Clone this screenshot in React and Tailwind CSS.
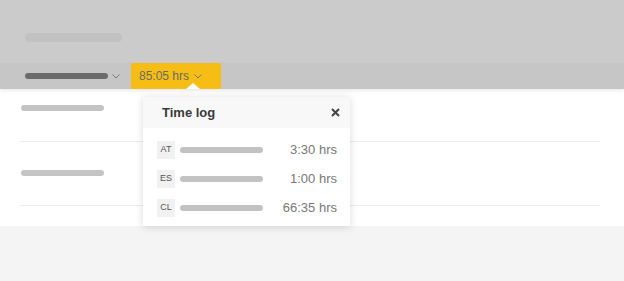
import React from 'react';

const Chevron = ({ className }) => (
  <svg className={className} width="8" height="5" viewBox="0 0 8 5" fill="none">
    <path d="M0.5 0.5 L4 4 L7.5 0.5" stroke="currentColor" strokeWidth="1" />
  </svg>
);

const entries = [
  { code: 'AT', time: '3:30 hrs' },
  { code: 'ES', time: '1:00 hrs' },
  { code: 'CL', time: '66:35 hrs' },
];

const App = () => {
  return (
    <div className="w-full min-h-[281px] bg-[#f4f4f4] font-['Liberation_Sans',Arial,sans-serif]">
      {/* Header */}
      <div className="h-[63px] bg-[#cbcbcb] pl-[25px] pt-[33px]">
        <div className="w-[97px] h-[9px] rounded-full bg-[#c1c1c1]" />
      </div>

      {/* Tabs row */}
      <div className="relative z-10 h-[26px] flex items-center bg-[#c6c6c6] pl-[25px] shadow-[0_2px_3px_rgba(0,0,0,0.08)]">
        <div className="w-[83px] h-[6px] rounded-full bg-[#6b6b6b]" />
        <Chevron className="ml-[4px] text-[#777]" />
        <div className="relative ml-[11px] h-full w-[90px] bg-[#f6be14] flex items-center pl-[8px] text-[12px] text-[#6a6a6a]">
          <span>85:05 hrs</span>
          <Chevron className="ml-[5px] text-[#777]" />
          <div className="absolute left-[55px] bottom-0 w-0 h-0 border-l-[7px] border-r-[7px] border-b-[6px] border-l-transparent border-r-transparent border-b-white" />
        </div>
      </div>

      {/* Content */}
      <div className="relative bg-white h-[137px] pl-[20px] pr-[24px]">
        <div className="h-[53px] pt-[16px] border-b border-[#ececec]">
          <div className="ml-[1px] w-[83px] h-[6px] rounded-full bg-[#c4c4c4]" />
        </div>
        <div className="h-[64px] pt-[28px] border-b border-[#ececec]">
          <div className="ml-[1px] w-[83px] h-[6px] rounded-full bg-[#c4c4c4]" />
        </div>

        {/* Time log popover */}
        <div className="absolute left-[143px] top-[8px] w-[207px] h-[129px] bg-white shadow-[0_1px_8px_rgba(0,0,0,0.15)]">
          <div className="h-[31px] bg-[#f8f8f8] flex items-center justify-between pl-[19px] pr-[10px]">
            <span className="text-[13px] font-bold text-[#3a3a3a]">Time log</span>
            <svg width="9" height="9" viewBox="0 0 9 9">
              <path d="M1 1 L8 8 M8 1 L1 8" stroke="#444" strokeWidth="2" />
            </svg>
          </div>
          <div className="pt-[13px] pl-[14px] pr-[13px] flex flex-col gap-[11px]">
            {entries.map(e => (
              <div key={e.code} className="h-[18px] flex items-center">
                <div className="w-[18px] h-[18px] bg-[#f1f1f1] flex items-center justify-center text-[9px] text-[#555]">
                  {e.code}
                </div>
                <div className="ml-[5px] w-[83px] h-[6px] rounded-full bg-[#c2c2c2]" />
                <span className="ml-auto text-[13px] text-[#777]">{e.time}</span>
              </div>
            ))}
          </div>
        </div>
      </div>
    </div>
  );
};

export default App;
